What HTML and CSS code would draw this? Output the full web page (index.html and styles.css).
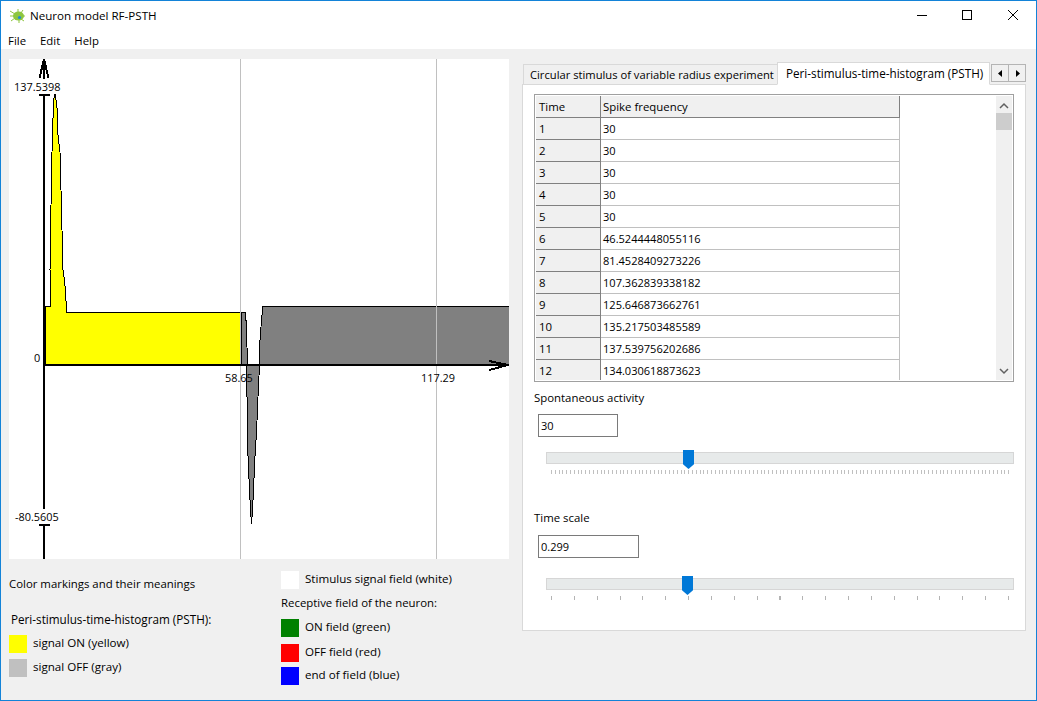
FILE: index.html
```html
<!DOCTYPE html>
<html lang="en">
<head>
    <meta charset="UTF-8" />
    <meta name="viewport" content="width=device-width, initial-scale=1.0" />
    <title>Neuron model RF-PSTH</title>
    <link rel="stylesheet" href="styles.css">
</head>
<body>
    <div class="window">
        <div class="titlebar">
            <svg class="app-icon" width="16" height="16" viewBox="0 0 16 16">
                <g stroke="#8dc63f" stroke-width="1">
                    <path d="M0 3 5 6M0 8H4M1 13 5 10M8 1V4M9 12V15M13 2 11 5M15 8H12M14 13 11 11"/>
                </g>
                <ellipse cx="8.5" cy="8" rx="5.5" ry="4.6" fill="#8dc63f"/>
                <circle cx="9.5" cy="9.5" r="1.6" fill="#1e88d8"/>
            </svg>
            <span class="title">Neuron model RF-PSTH</span>
            <div class="controls">
                <svg width="46" height="29" viewBox="0 0 46 29"><path d="M19 14.5H29" stroke="#000"/></svg>
                <svg width="46" height="29" viewBox="0 0 46 29"><rect x="18.5" y="9.5" width="9" height="9" fill="none" stroke="#000"/></svg>
                <svg width="46" height="29" viewBox="0 0 46 29"><path d="M18 9 28 19M28 9 18 19" stroke="#000"/></svg>
            </div>
        </div>
        <div class="menubar">
            <span class="menu-file">File</span>
            <span class="menu-edit">Edit</span>
            <span class="menu-help">Help</span>
        </div>
        <div class="main">
            <div class="left">
                <svg class="chart" width="500" height="500" viewBox="9 59 500 500">
                    <g shape-rendering="crispEdges">
                        <polygon fill="#ffff00" stroke="#000" points="45.5,365 45.5,306.5 50,306.5 50,270 51,205 52,152 53,118 54,98 55,94 56,100 57,108 58,135 60,152 61,190 62,230 63,270 64,277 65.5,290 66.5,311 67,312.5 241,312.5 241,365"/>
                        <polygon fill="#808080" stroke="#000" points="241,312.5 245.5,312.5 246.5,328 247.5,365 241,365"/>
                        <polygon fill="#808080" stroke="#000" points="259,365 260,340 261.5,320 263,306.5 509,306.5 509,365"/>
                        <polygon fill="#808080" stroke="#000" points="246.5,365 259.5,365 258,397 256.5,433 255,456 253.5,490 252.5,510 251.5,524 250.5,510 249.5,490 248,456 247,433 247,397"/>
                        <path d="M240.5 59V559M436.5 59V559" stroke="#c0c0c0" fill="none"/>
                        <path d="M44 59V79M44 94V509M44 524V559M44 365H509M39 94.5H50M39 524.5H50" stroke="#000" stroke-width="2" fill="none"/>
                        <path d="M39.5 78 44 59 48.5 78M489 361 508 365 489 370" stroke="#000" stroke-width="2" fill="none"/>
                    </g>
                    <text x="14" y="91">137.5398</text>
                    <text x="34" y="362">0</text>
                    <text x="15" y="521">-80.5605</text>
                    <text x="225" y="382">58.65</text>
                    <text x="421" y="382">117.29</text>
                </svg>
                <div class="legend">
                    <div class="legend-col">
                        <div class="legend-heading">Color markings and their meanings</div>
                        <div class="legend-sub">Peri-stimulus-time-histogram (PSTH):</div>
                        <div class="legend-row on"><span class="swatch yellow"></span>signal ON (yellow)</div>
                        <div class="legend-row off"><span class="swatch gray"></span>signal OFF (gray)</div>
                    </div>
                    <div class="legend-col second">
                        <div class="legend-row stimulus"><span class="swatch white"></span>Stimulus signal field (white)</div>
                        <div class="legend-receptive">Receptive field of the neuron:</div>
                        <div class="legend-row on-field"><span class="swatch green"></span>ON field (green)</div>
                        <div class="legend-row off-field"><span class="swatch red"></span>OFF field (red)</div>
                        <div class="legend-row end-field"><span class="swatch blue"></span>end of field (blue)</div>
                    </div>
                </div>
            </div>
            <div class="right">
                <div class="tabs">
                    <div class="tab">Circular stimulus of variable radius experiment</div>
                    <div class="tab active">Peri-stimulus-time-histogram (PSTH)</div>
                    <div class="tab-scroll">
                        <button><svg width="5" height="7" viewBox="0 0 5 7"><path d="M4 0V7L0 3.5Z"/></svg></button>
                        <button><svg width="5" height="7" viewBox="0 0 5 7"><path d="M1 0V7L5 3.5Z"/></svg></button>
                    </div>
                </div>
                <div class="pane">
                    <div class="grid-box">
                        <div class="grid-view">
                            <table>
                                <thead>
                                    <tr><th class="col-time">Time</th><th class="col-freq">Spike frequency</th></tr>
                                </thead>
                                <tbody>
                                    <tr><th>1</th><td>30</td></tr>
                                    <tr><th>2</th><td>30</td></tr>
                                    <tr><th>3</th><td>30</td></tr>
                                    <tr><th>4</th><td>30</td></tr>
                                    <tr><th>5</th><td>30</td></tr>
                                    <tr><th>6</th><td>46.5244448055116</td></tr>
                                    <tr><th>7</th><td>81.4528409273226</td></tr>
                                    <tr><th>8</th><td>107.362839338182</td></tr>
                                    <tr><th>9</th><td>125.646873662761</td></tr>
                                    <tr><th>10</th><td>135.217503485589</td></tr>
                                    <tr><th>11</th><td>137.539756202686</td></tr>
                                    <tr><th>12</th><td>134.030618873623</td></tr>
                                </tbody>
                            </table>
                        </div>
                        <div class="scrollbar">
                            <svg width="16" height="17" viewBox="0 0 16 17"><path d="M4 12 8 8 12 12" fill="none" stroke="#606060" stroke-width="1.5"/></svg>
                            <div class="scroll-thumb"></div>
                            <svg class="scroll-down" width="16" height="17" viewBox="0 0 16 17"><path d="M4 6 8 10 12 6" fill="none" stroke="#606060" stroke-width="1.5"/></svg>
                        </div>
                    </div>
                    <div class="field-label spontaneous">Spontaneous activity</div>
                    <input class="field-input short" type="text" value="30">
                    <div class="slider first">
                        <div class="track"><span class="thumb" style="left: 136px"></span></div>
                        <div class="ticks dense"></div>
                    </div>
                    <div class="field-label timescale">Time scale</div>
                    <input class="field-input wide" type="text" value="0.299">
                    <div class="slider second">
                        <div class="track"><span class="thumb" style="left: 135px"></span></div>
                        <div class="ticks sparse"></div>
                    </div>
                </div>
            </div>
        </div>
    </div>
</body>
</html>
```

FILE: styles.css
```css
* {
    box-sizing: border-box;
}
body {
    margin: 0;
    font-family: "Open Sans", sans-serif;
    font-size: 11.4px;
    line-height: 16px;
    color: #000;
}
.window {
    width: 1037px;
    height: 701px;
    border: 1px solid #1383d8;
    background-color: #f0f0f0;
    display: flex;
    flex-direction: column;
    overflow: hidden;
}
.titlebar {
    height: 29px;
    background-color: white;
    display: flex;
    align-items: center;
    padding-left: 9px;
}
.app-icon {
    margin-top: 1px;
}
.title {
    margin-left: 4px;
    font-size: 11.6px;
}
.controls {
    margin-left: auto;
    display: flex;
}
.menubar {
    height: 19px;
    background-color: white;
    display: flex;
    align-items: center;
    padding: 2px 0 0 7px;
    font-size: 11.4px;
}
.menu-edit {
    margin-left: 14px;
}
.menu-help {
    margin-left: 14px;
}
.main {
    flex: 1;
    display: flex;
    padding: 10px 0 0 8px;
}
.left {
    width: 500px;
}
.chart {
    display: block;
    background-color: white;
}
.chart text {
    font-family: "Open Sans", sans-serif;
    font-size: 10.9px;
}
.legend {
    display: flex;
}
.legend-col {
    flex: none;
    width: 272px;
    padding-top: 17px;
}
.legend-col.second {
    width: 228px;
    padding-top: 12px;
}
.legend-sub {
    margin: 19px 0 0 2px;
    font-size: 11.7px;
}
.legend-row {
    display: flex;
    gap: 6px;
    height: 18px;
    font-size: 11.6px;
}
.legend-row.on {
    margin-top: 8px;
}
.legend-row.off {
    margin-top: 6px;
}
.legend-receptive {
    margin-top: 6px;
}
.legend-row.on-field {
    margin-top: 8px;
}
.legend-row.off-field {
    margin-top: 7px;
}
.legend-row.end-field {
    margin-top: 5px;
}
.swatch {
    width: 18px;
    height: 18px;
}
.yellow {
    background-color: #ffff00;
}
.gray {
    background-color: #c0c0c0;
}
.white {
    background-color: white;
}
.green {
    background-color: #008000;
}
.red {
    background-color: #ff0000;
}
.blue {
    background-color: #0000ff;
}
.right {
    width: 504px;
    margin-left: 13px;
    padding-top: 3px;
}
.tabs {
    height: 22px;
    display: flex;
    align-items: flex-end;
    padding-left: 1px;
    position: relative;
    z-index: 1;
}
.tab {
    width: 255px;
    height: 20px;
    padding: 2px 0 0 6px;
    border: 1px solid #d9d9d9;
    border-bottom: none;
    white-space: nowrap;
    font-size: 11.2px;
}
.tab.active {
    width: 213px;
    height: 23px;
    margin-left: -1px;
    padding: 2px 0 0 8px;
    background-color: white;
    border-bottom: 1px solid white;
    margin-bottom: -1px;
    font-size: 11.7px;
}
.tab-scroll {
    display: flex;
    align-self: flex-start;
    margin: 2px 0 0 1px;
}
.tab-scroll button {
    width: 18px;
    height: 18px;
    padding: 0;
    border: 1px solid #b4b4b4;
    background-color: #f0f0f0;
    display: flex;
    align-items: center;
    justify-content: center;
}
.tab-scroll button + button {
    margin-left: -1px;
}
.pane {
    width: 504px;
    height: 547px;
    background-color: white;
    border: 1px solid #d9d9d9;
    padding: 9px 0 0 11px;
}
.grid-box {
    width: 480px;
    height: 288px;
    border: 1px solid #a0a0a0;
    padding: 1px;
    display: flex;
    justify-content: space-between;
}
.grid-view {
    width: 459px;
    height: 284px;
    overflow: hidden;
}
table {
    border-collapse: separate;
    border-spacing: 0;
    table-layout: fixed;
    width: 364px;
}
th,
td {
    height: 22px;
    padding: 0 2px;
    font-weight: normal;
    text-align: left;
    white-space: nowrap;
}
th {
    padding-left: 3px;
    background-color: #f0f0f0;
    border-right: 1px solid #808080;
    border-bottom: 1px solid #808080;
}
td {
    font-size: 11.05px;
    border-right: 1px solid #c0c0c0;
    border-bottom: 1px solid #c0c0c0;
}
.col-time {
    width: 65px;
}
.col-freq {
    width: 299px;
    padding-left: 2px;
}
.scrollbar {
    width: 16px;
    background-color: #f0f0f0;
    display: flex;
    flex-direction: column;
}
.scrollbar svg {
    flex: none;
}
.scroll-thumb {
    width: 16px;
    height: 17px;
    background-color: #cdcdcd;
}
.scroll-down {
    margin-top: auto;
}
.field-label.spontaneous {
    margin-top: 8px;
}
.field-label.timescale {
    margin-top: 36px;
}
.field-input {
    display: block;
    height: 23px;
    margin-left: 4px;
    padding: 0 2px;
    border: 1px solid #7a7a7a;
    border-radius: 0;
    font: inherit;
    font-size: 11px;
    color: #000;
    background-color: white;
}
.spontaneous + .field-input {
    margin-top: 8px;
}
.timescale + .field-input {
    margin-top: 9px;
}
.short {
    width: 80px;
}
.wide {
    width: 101px;
}
.slider {
    width: 468px;
    margin-left: 12px;
}
.slider.first {
    margin-top: 15px;
}
.slider.second {
    margin-top: 20px;
}
.track {
    height: 12px;
    background-color: #e7eaea;
    border: 1px solid #d6d6d6;
    position: relative;
}
.thumb {
    position: absolute;
    top: -3px;
    width: 11px;
    height: 19px;
    background-color: #0078d7;
    clip-path: polygon(0 0, 100% 0, 100% 75%, 50% 100%, 0 75%);
}
.ticks {
    height: 4px;
    margin: 6px 5px 0 5px;
}
.ticks.dense {
    background: repeating-linear-gradient(90deg, #c0c0c0 0 1px, transparent 1px 3.81px);
}
.ticks.sparse {
    background: repeating-linear-gradient(90deg, #b4b4b4 0 1px, transparent 1px 22.85px);
}
```
